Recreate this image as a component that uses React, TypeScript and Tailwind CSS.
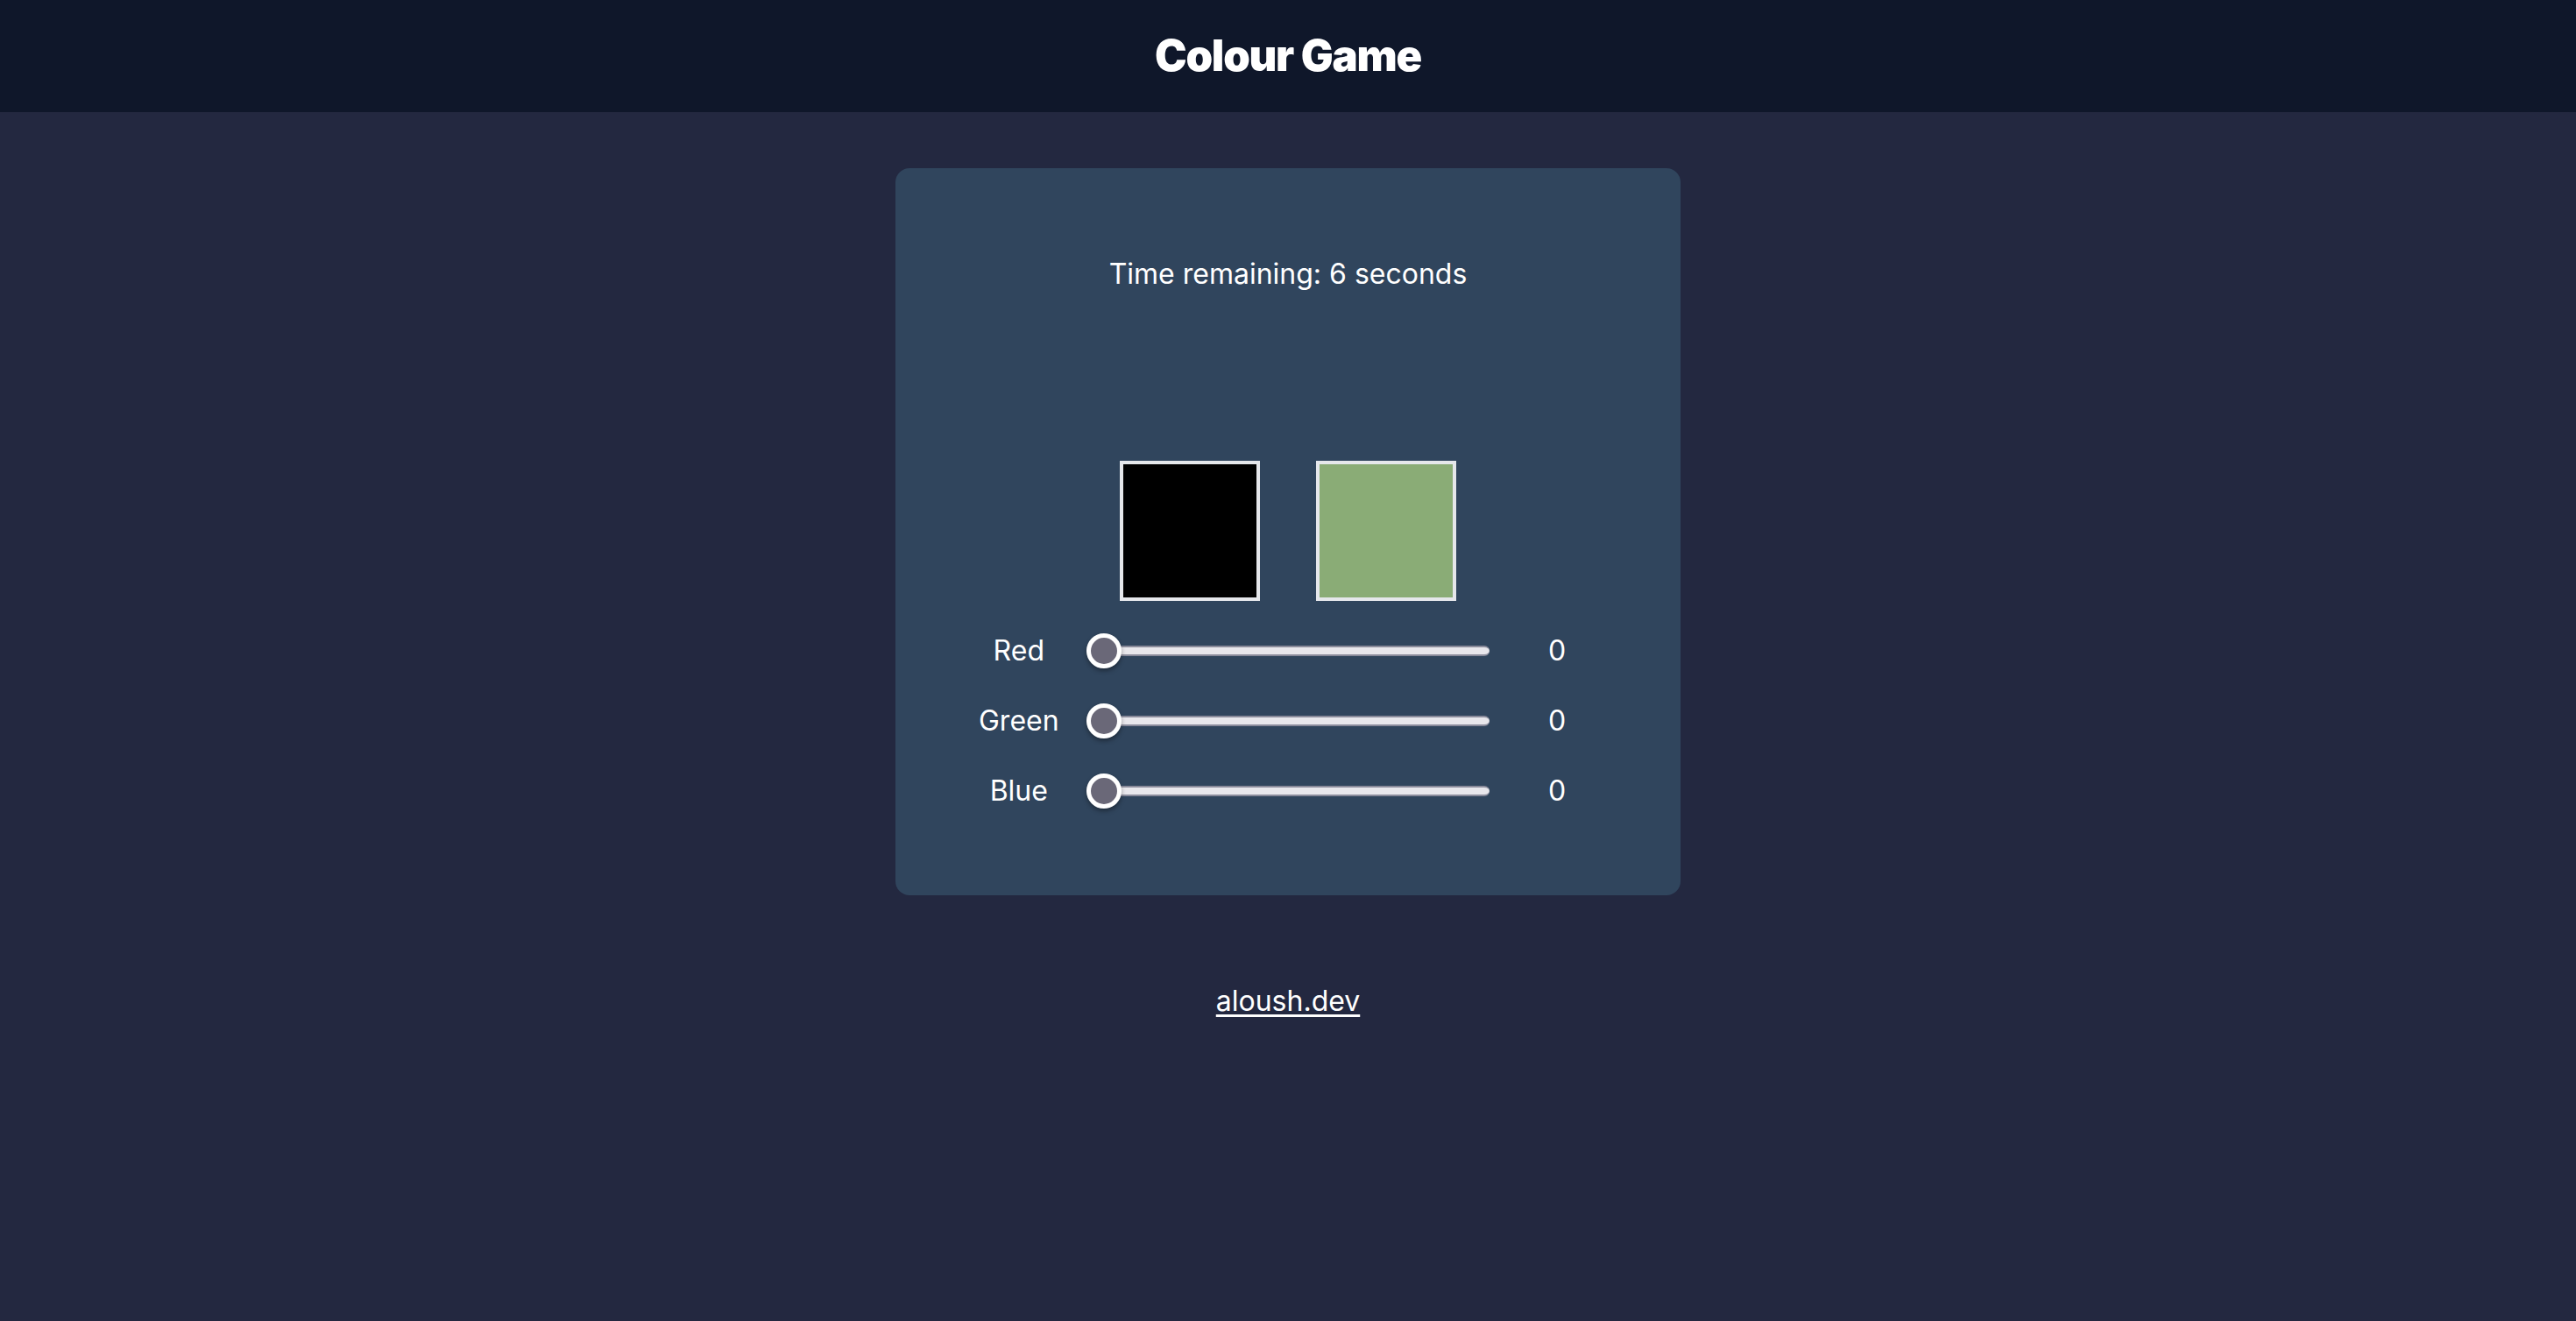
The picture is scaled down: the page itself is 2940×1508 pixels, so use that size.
const channels = [
  { name: "Red", value: 0 },
  { name: "Green", value: 0 },
  { name: "Blue", value: 0 },
];

function Slider({ value }: { value: number }) {
  const pct = (value / 255) * 100;
  return (
    <div className="relative h-10 w-full flex items-center">
      <div className="h-3 w-full rounded-full bg-[#e8e7ec] border-y-2 border-[#8a8b9b]" />
      <div
        className="absolute top-0 h-10 w-10 rounded-full border-[5px] border-white bg-[#6a6878] shadow-[0_3px_5px_rgba(0,0,0,0.35)]"
        style={{ left: `calc(${pct}% - ${(pct / 100) * 40}px)` }}
      />
    </div>
  );
}

export default function App() {
  return (
    <div className="min-h-screen bg-[#232840] text-white font-['Inter',sans-serif]">
      <header className="h-32 bg-[#0f172a] flex items-center justify-center">
        <h1 className="text-[49px] font-black tracking-tight">Colour Game</h1>
      </header>

      <main className="flex flex-col items-center pt-16">
        <div className="w-[896px] rounded-2xl bg-[#30455d] px-16 pt-[101px] pb-[99px]">
          <p className="text-[32px] text-center leading-10">Time remaining: 6 seconds</p>

          <div className="mt-[193px] flex justify-center gap-16">
            <div className="h-40 w-40 border-4 border-[#e5e7eb] bg-black" />
            <div className="h-40 w-40 border-4 border-[#e5e7eb] bg-[#8aac76]" />
          </div>

          <div className="mt-[37px] flex flex-col gap-10">
            {channels.map((c) => (
              <div key={c.name} className="grid grid-cols-[1fr_3fr_1fr] items-center">
                <span className="text-[32px] leading-10 text-center">{c.name}</span>
                <Slider value={c.value} />
                <span className="text-[32px] leading-10 text-center">{c.value}</span>
              </div>
            ))}
          </div>
        </div>

        <a href="#" className="mt-[101px] text-[32px] leading-10 underline underline-offset-4">
          aloush.dev
        </a>
      </main>
    </div>
  );
}
